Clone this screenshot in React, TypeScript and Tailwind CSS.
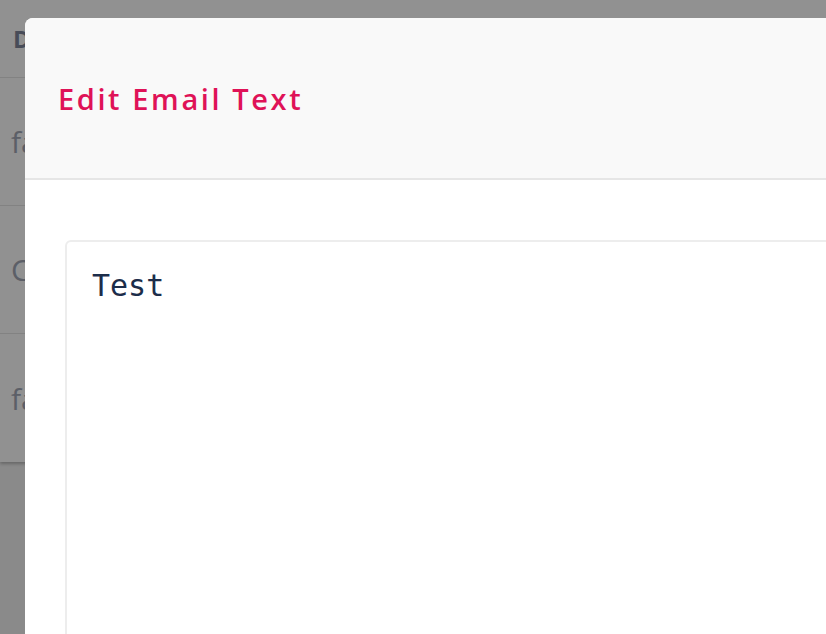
import React from "react";

const rows = ["fallback_email_text", "Custom email text", "fallback_email_text"];

const App = () => {
  return (
    <div className="relative w-[826px] h-[634px] overflow-hidden bg-[#f3f3f3] font-['Open_Sans',sans-serif]">
      {/* page behind the modal */}
      <div className="bg-white shadow-[0_2px_3px_rgba(0,0,0,0.25)]">
        <div className="h-[78px] flex items-center px-[13px] border-b border-[#e4e4e4]">
          <span className="text-[24px] font-bold text-[#7f879b]">Description</span>
        </div>
        {rows.map((r, i) => (
          <div
            key={i}
            className="h-[128px] flex items-center px-[11px] border-b border-[#e4e4e4] last:border-b-0"
          >
            <span className="text-[30px] text-[#a2a8b6]">{r}</span>
          </div>
        ))}
      </div>

      {/* overlay */}
      <div className="absolute inset-0 bg-black/[0.43]" />

      {/* modal */}
      <div className="absolute left-[25px] top-[18px] w-[900px] h-[700px] bg-white rounded-tl-[8px] overflow-hidden">
        <div className="h-[162px] bg-[#f9f9f9] border-b-2 border-[#e6e6e6] flex items-center px-[33px]">
          <h2 className="text-[29px] font-semibold text-[#df1257] tracking-[2.6px] leading-none pt-[1px]">
            Edit Email Text
          </h2>
        </div>
        <div className="pt-[60px] pl-[40px]">
          <div className="h-[600px] border-2 border-[#ededed] rounded-[6px] px-[25px] pt-[29px]">
            <p className="font-['DejaVu_Sans_Mono',monospace] text-[30px] leading-none text-[#1c2d4a]">Test</p>
          </div>
        </div>
      </div>
    </div>
  );
};

export default App;
